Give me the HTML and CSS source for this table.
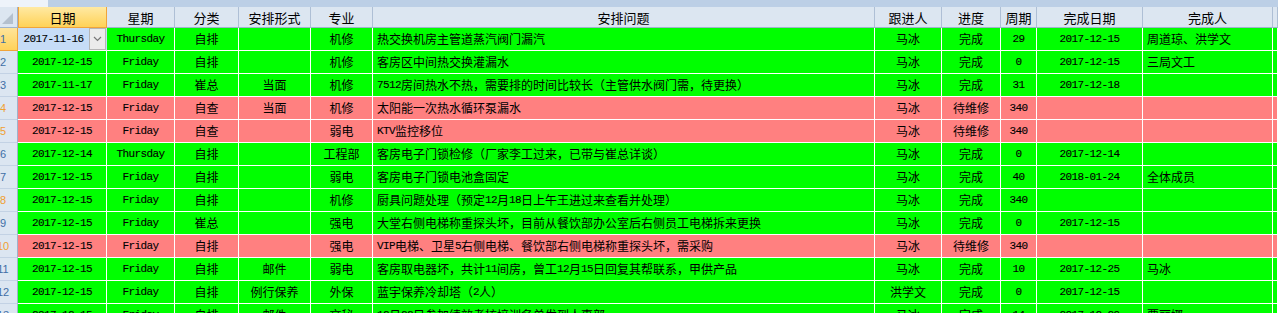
FILE: index.html
```html
<!DOCTYPE html>
<html lang="zh">
<head>
<meta charset="utf-8">
<title>安排表</title>
<link rel="stylesheet" href="styles.css">
</head>
<body>
<div class="top"><div class="top-a"></div><div class="top-b"></div></div>
<div class="sheet">
  <div class="hd corner"><svg width="11" height="11" viewBox="0 0 11 11"><polygon points="11,0 11,11 0,11" fill="#b4c0ce"/></svg></div>
  <div class="hd sel">日期</div>
  <div class="hd">星期</div>
  <div class="hd">分类</div>
  <div class="hd">安排形式</div>
  <div class="hd">专业</div>
  <div class="hd">安排问题</div>
  <div class="hd">跟进人</div>
  <div class="hd">进度</div>
  <div class="hd">周期</div>
  <div class="hd">完成日期</div>
  <div class="hd">完成人</div>
  <div class="hd"></div>

  <!-- row 1 -->
  <div class="rn rsel"><span>1</span></div>
  <div class="g cur"><span class="m ct">2017-11-16</span><span class="dd"><svg width="9" height="6" viewBox="0 0 9 6"><polyline points="1,1 4.5,4.5 8,1" fill="none" stroke="#777" stroke-width="1.2"/></svg></span></div>
  <div class="g"><span class="m">Thursday</span></div>
  <div class="g">自排</div>
  <div class="g"></div>
  <div class="g">机修</div>
  <div class="g l">热交换机房主管道蒸汽阀门漏汽</div>
  <div class="g">马冰</div>
  <div class="g">完成</div>
  <div class="g"><span class="m">29</span></div>
  <div class="g"><span class="m">2017-12-15</span></div>
  <div class="g l">周道琼、洪学文</div>
  <div class="g"></div>

  <!-- row 2 -->
  <div class="rn"><span>2</span></div>
  <div class="g"><span class="m">2017-12-15</span></div>
  <div class="g"><span class="m">Friday</span></div>
  <div class="g">自排</div>
  <div class="g"></div>
  <div class="g">机修</div>
  <div class="g l">客房区中间热交换灌漏水</div>
  <div class="g">马冰</div>
  <div class="g">完成</div>
  <div class="g"><span class="m">0</span></div>
  <div class="g"><span class="m">2017-12-15</span></div>
  <div class="g l">三局文工</div>
  <div class="g"></div>

  <!-- row 3 -->
  <div class="rn"><span>3</span></div>
  <div class="g"><span class="m">2017-11-17</span></div>
  <div class="g"><span class="m">Friday</span></div>
  <div class="g">崔总</div>
  <div class="g">当面</div>
  <div class="g">机修</div>
  <div class="g l"><span class="m">7512</span>房间热水不热，需要排的时间比较长（主管供水阀门需，待更换）</div>
  <div class="g">马冰</div>
  <div class="g">完成</div>
  <div class="g"><span class="m">31</span></div>
  <div class="g"><span class="m">2017-12-18</span></div>
  <div class="g l"></div>
  <div class="g"></div>

  <!-- row 4 -->
  <div class="rn or"><span>4</span></div>
  <div class="p"><span class="m">2017-12-15</span></div>
  <div class="p"><span class="m">Friday</span></div>
  <div class="p">自查</div>
  <div class="p">当面</div>
  <div class="p">机修</div>
  <div class="p l">太阳能一次热水循环泵漏水</div>
  <div class="p">马冰</div>
  <div class="p">待维修</div>
  <div class="p"><span class="m">340</span></div>
  <div class="p"></div>
  <div class="p l"></div>
  <div class="p"></div>

  <!-- row 5 -->
  <div class="rn or"><span>5</span></div>
  <div class="p"><span class="m">2017-12-15</span></div>
  <div class="p"><span class="m">Friday</span></div>
  <div class="p">自查</div>
  <div class="p"></div>
  <div class="p">弱电</div>
  <div class="p l"><span class="m">KTV</span>监控移位</div>
  <div class="p">马冰</div>
  <div class="p">待维修</div>
  <div class="p"><span class="m">340</span></div>
  <div class="p"></div>
  <div class="p l"></div>
  <div class="p"></div>

  <!-- row 6 -->
  <div class="rn"><span>6</span></div>
  <div class="g"><span class="m">2017-12-14</span></div>
  <div class="g"><span class="m">Thursday</span></div>
  <div class="g">自排</div>
  <div class="g"></div>
  <div class="g">工程部</div>
  <div class="g l">客房电子门锁检修（厂家李工过来，已带与崔总详谈）</div>
  <div class="g">马冰</div>
  <div class="g">完成</div>
  <div class="g"><span class="m">0</span></div>
  <div class="g"><span class="m">2017-12-14</span></div>
  <div class="g l"></div>
  <div class="g"></div>

  <!-- row 7 -->
  <div class="rn"><span>7</span></div>
  <div class="g"><span class="m">2017-12-15</span></div>
  <div class="g"><span class="m">Friday</span></div>
  <div class="g">自排</div>
  <div class="g"></div>
  <div class="g">弱电</div>
  <div class="g l">客房电子门锁电池盒固定</div>
  <div class="g">马冰</div>
  <div class="g">完成</div>
  <div class="g"><span class="m">40</span></div>
  <div class="g"><span class="m">2018-01-24</span></div>
  <div class="g l">全体成员</div>
  <div class="g"></div>

  <!-- row 8 -->
  <div class="rn or"><span>8</span></div>
  <div class="g"><span class="m">2017-12-15</span></div>
  <div class="g"><span class="m">Friday</span></div>
  <div class="g">自排</div>
  <div class="g"></div>
  <div class="g">机修</div>
  <div class="g l">厨具问题处理（预定<span class="m">12</span>月<span class="m">18</span>日上午王进过来查看并处理）</div>
  <div class="g">马冰</div>
  <div class="g">完成</div>
  <div class="g"><span class="m">340</span></div>
  <div class="g"></div>
  <div class="g l"></div>
  <div class="g"></div>

  <!-- row 9 -->
  <div class="rn"><span>9</span></div>
  <div class="g"><span class="m">2017-12-15</span></div>
  <div class="g"><span class="m">Friday</span></div>
  <div class="g">崔总</div>
  <div class="g"></div>
  <div class="g">强电</div>
  <div class="g l">大堂右侧电梯称重探头坏，目前从餐饮部办公室后右侧员工电梯拆来更换</div>
  <div class="g">马冰</div>
  <div class="g">完成</div>
  <div class="g"><span class="m">0</span></div>
  <div class="g"><span class="m">2017-12-15</span></div>
  <div class="g l"></div>
  <div class="g"></div>

  <!-- row 10 -->
  <div class="rn or"><span>10</span></div>
  <div class="p"><span class="m">2017-12-15</span></div>
  <div class="p"><span class="m">Friday</span></div>
  <div class="p">自排</div>
  <div class="p"></div>
  <div class="p">强电</div>
  <div class="p l"><span class="m">VIP</span>电梯、卫星<span class="m">5</span>右侧电梯、餐饮部右侧电梯称重探头坏，需采购</div>
  <div class="p">马冰</div>
  <div class="p">待维修</div>
  <div class="p"><span class="m">340</span></div>
  <div class="p"></div>
  <div class="p l"></div>
  <div class="p"></div>

  <!-- row 11 -->
  <div class="rn"><span>11</span></div>
  <div class="g"><span class="m">2017-12-15</span></div>
  <div class="g"><span class="m">Friday</span></div>
  <div class="g">自排</div>
  <div class="g">邮件</div>
  <div class="g">弱电</div>
  <div class="g l">客房取电器坏，共计<span class="m">11</span>间房，曾工<span class="m">12</span>月<span class="m">15</span>日回复其帮联系，甲供产品</div>
  <div class="g">马冰</div>
  <div class="g">完成</div>
  <div class="g"><span class="m">10</span></div>
  <div class="g"><span class="m">2017-12-25</span></div>
  <div class="g l">马冰</div>
  <div class="g"></div>

  <!-- row 12 -->
  <div class="rn"><span>12</span></div>
  <div class="g"><span class="m">2017-12-15</span></div>
  <div class="g"><span class="m">Friday</span></div>
  <div class="g">自排</div>
  <div class="g">例行保养</div>
  <div class="g">外保</div>
  <div class="g l">蓝宇保养冷却塔（<span class="m">2</span>人）</div>
  <div class="g">洪学文</div>
  <div class="g">完成</div>
  <div class="g"><span class="m">0</span></div>
  <div class="g"><span class="m">2017-12-15</span></div>
  <div class="g l"></div>
  <div class="g"></div>

  <!-- row 13 -->
  <div class="rn"><span>13</span></div>
  <div class="g"><span class="m">2017-12-15</span></div>
  <div class="g"><span class="m">Friday</span></div>
  <div class="g">自排</div>
  <div class="g">邮件</div>
  <div class="g">文秘</div>
  <div class="g l"><span class="m">12</span>月<span class="m">22</span>日参加绩效考核培训名单发到人事部</div>
  <div class="g">马冰</div>
  <div class="g">完成</div>
  <div class="g"><span class="m">14</span></div>
  <div class="g"><span class="m">2017-12-29</span></div>
  <div class="g l">贾丽娜</div>
  <div class="g"></div>
</div>
</body>
</html>
```

FILE: styles.css
```css
html, body {
  margin: 0;
  padding: 0;
  background: #ffffff;
  overflow: hidden;
}

body {
  font-family: "Noto Sans CJK SC", "Noto Sans CJK JP", sans-serif;
  font-size: 12px;
  color: #000;
}

.top {
  display: flex;
  height: 7px;
}

.top-a {
  width: 48px;
  background: #eef3fa;
}

.top-b {
  flex: 1;
  background: #bccfe6;
}

.sheet {
  display: grid;
  grid-template-columns: 18px 89px 68px 64px 72px 62px 502px 67px 59px 36px 106px 130px 5px;
  grid-template-rows: 21px;
  grid-auto-rows: 23px;
}

.sheet > div {
  box-sizing: border-box;
  display: flex;
  align-items: center;
  justify-content: center;
  overflow: hidden;
  white-space: nowrap;
  border-right: 1px solid #ffffff;
  border-bottom: 1px solid #ffffff;
  line-height: 1;
}

.sheet > .hd {
  background: #dce6f1;
  border-right: 1px solid #aebfd5;
  border-bottom: 1px solid #9eb3cc;
  font-size: 13px;
}

.sheet > .corner {
  justify-content: flex-end;
  align-items: flex-end;
  padding: 0 4px 3px 0;
  border-right: 1px solid #9eb3cc;
}

.sheet > .sel {
  background: linear-gradient(#ffe9a3, #ffd257);
  border: 1px solid #f0a43a;
  border-top: none;
}

.sheet > .rn {
  background: #dce6f1;
  border-right: 1px solid #9eb3cc;
  border-bottom: 1px solid #c3d2e4;
  justify-content: flex-start;
  font-family: "Liberation Sans", sans-serif;
  font-size: 11px;
  color: #3f6fa6;
}

.rn span {
  display: block;
  flex: none;
  width: 40px;
  margin-left: -17px;
  text-align: center;
}

.sheet > .or {
  color: #f0a030;
}

.sheet > .rsel {
  background: linear-gradient(#ffe49a, #ffd25a);
  border-right: 1px solid #f0a43a;
  border-bottom: 1px solid #f0a43a;
}

.g {
  background: #00ff00;
}

.p {
  background: #ff8080;
}

.sheet > .l {
  justify-content: flex-start;
  padding-left: 4px;
}

.m {
  font-family: "Liberation Mono", monospace;
  font-size: 11px;
  letter-spacing: -0.6px;
  -webkit-text-stroke: 0.12px #000;
}

.sheet > .cur {
  background: #c6dcf7;
  justify-content: flex-start;
  align-items: stretch;
  border-right: 1px solid #c6dcf7;
}

.ct {
  flex: 1;
  display: flex;
  align-items: center;
  justify-content: center;
}

.dd {
  width: 17px;
  box-sizing: border-box;
  background: #ebebeb;
  border: 1px solid #b5b5b5;
  display: flex;
  align-items: center;
  justify-content: center;
}
```
